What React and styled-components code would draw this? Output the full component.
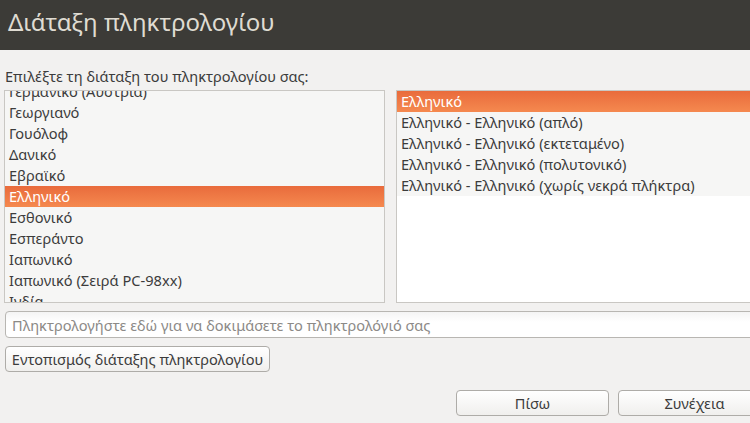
import React from "react";
import styled, { createGlobalStyle } from "styled-components";

const GlobalStyle = createGlobalStyle`
  html, body {
    margin: 0;
    padding: 0;
    background: #f2f1f0;
    overflow: hidden;
  }
  body {
    font-family: "Noto Sans", "DejaVu Sans", sans-serif;
    color: #3c3c3c;
  }
`;

const Window = styled.div`
  width: 750px;
  height: 423px;
  overflow: hidden;
  background: #f2f1f0;
`;

const TitleBar = styled.div`
  height: 50px;
  background: #3c3b37;
  display: flex;
  align-items: center;
  padding: 0 0 7px 8px;
  box-sizing: border-box;
`;

const Title = styled.h1`
  margin: 0;
  font-size: 24px;
  font-weight: normal;
  color: #dfdbd2;
`;

const Content = styled.div`
  width: 790px;
  padding: 16px 0 0 4px;
  box-sizing: border-box;
`;

const Label = styled.div`
  font-size: 14.6px;
  line-height: 20px;
  padding-left: 1px;
  margin-bottom: 4px;
`;

const Panes = styled.div`
  display: grid;
  grid-template-columns: 381px 1fr;
  column-gap: 11px;
`;

const ListBox = styled.div`
  height: 211px;
  border: 1px solid #c9c7c3;
  background: #ffffff;
  overflow: hidden;
`;

const Rows = styled.div`
  margin-top: ${(p) => p.$offset || 0}px;
`;

const Row = styled.div`
  height: 21px;
  line-height: 21px;
  padding-left: 4px;
  font-size: 14.6px;
  white-space: nowrap;
  color: ${(p) => (p.$selected ? "#ffffff" : "#3c3c3c")};
  background: ${(p) =>
    p.$selected
      ? "linear-gradient(to bottom, #e96b3c, #f5894f)"
      : "#f6f6f5"};
`;

const Entry = styled.div`
  margin-top: 8px;
  width: 780px;
  height: 27px;
  box-sizing: border-box;
  border: 1px solid #b8b6b2;
  border-radius: 4px;
  background: linear-gradient(to bottom, #f4f4f4, #ffffff 40%);
  display: flex;
  align-items: center;
  padding-left: 6px;
  margin-left: 1px;
  font-size: 14.6px;
  color: #8c8a87;
`;

const Button = styled.div`
  height: 26px;
  box-sizing: border-box;
  border: 1px solid #aeaca8;
  border-radius: 4px;
  background: linear-gradient(to bottom, #ffffff, #f0efed);
  display: flex;
  align-items: center;
  justify-content: center;
  font-size: 14.6px;
  color: #3c3c3c;
  width: ${(p) => p.$width}px;
`;

const DetectRow = styled.div`
  margin-top: 8px;
  padding-left: 1px;
`;

const Actions = styled.div`
  margin-top: 18px;
  padding-left: 452px;
  display: flex;
  gap: 9px;
`;

const leftItems = [
  "Γερμανικό (Αυστρία)",
  "Γεωργιανό",
  "Γουόλοφ",
  "Δανικό",
  "Εβραϊκό",
  "Ελληνικό",
  "Εσθονικό",
  "Εσπεράντο",
  "Ιαπωνικό",
  "Ιαπωνικό (Σειρά PC-98xx)",
  "Ινδία",
];

const rightItems = [
  "Ελληνικό",
  "Ελληνικό - Ελληνικό (απλό)",
  "Ελληνικό - Ελληνικό (εκτεταμένο)",
  "Ελληνικό - Ελληνικό (πολυτονικό)",
  "Ελληνικό - Ελληνικό (χωρίς νεκρά πλήκτρα)",
];

export default function App() {
  return (
    <Window>
      <GlobalStyle />
      <TitleBar>
        <Title>Διάταξη πληκτρολογίου</Title>
      </TitleBar>
      <Content>
        <Label>Επιλέξτε τη διάταξη του πληκτρολογίου σας:</Label>
        <Panes>
          <ListBox>
            <Rows $offset={-10}>
              {leftItems.map((item) => (
                <Row key={item} $selected={item === "Ελληνικό"}>
                  {item}
                </Row>
              ))}
            </Rows>
          </ListBox>
          <ListBox>
            <Rows>
              {rightItems.map((item, i) => (
                <Row key={item} $selected={i === 0}>
                  {item}
                </Row>
              ))}
            </Rows>
          </ListBox>
        </Panes>
        <Entry>Πληκτρολογήστε εδώ για να δοκιμάσετε το πληκτρολόγιό σας</Entry>
        <DetectRow>
          <Button $width={265}>Εντοπισμός διάταξης πληκτρολογίου</Button>
        </DetectRow>
        <Actions>
          <Button $width={153}>Πίσω</Button>
          <Button $width={153}>Συνέχεια</Button>
        </Actions>
      </Content>
    </Window>
  );
}
